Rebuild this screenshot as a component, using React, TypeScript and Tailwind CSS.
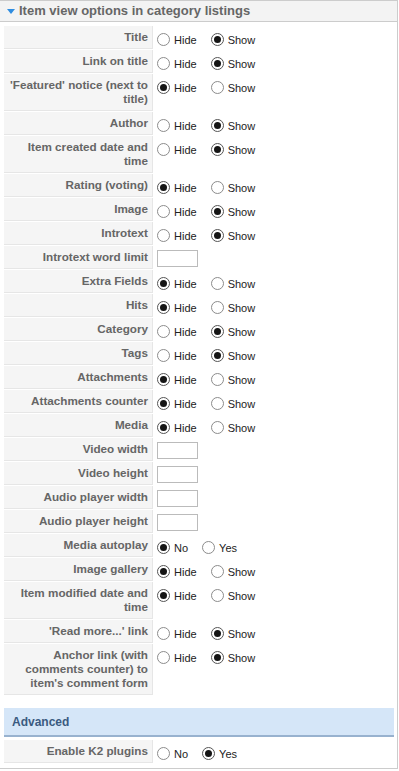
import React from 'react';

type Option = { label: string; checked: boolean };
type Row = { label: string; options?: Option[]; input?: boolean };

const hs = (show: boolean): Option[] => [
  { label: 'Hide', checked: !show },
  { label: 'Show', checked: show },
];

const rows: Row[] = [
  { label: 'Title', options: hs(true) },
  { label: 'Link on title', options: hs(true) },
  { label: "'Featured' notice (next to title)", options: hs(false) },
  { label: 'Author', options: hs(true) },
  { label: 'Item created date and time', options: hs(true) },
  { label: 'Rating (voting)', options: hs(false) },
  { label: 'Image', options: hs(true) },
  { label: 'Introtext', options: hs(true) },
  { label: 'Introtext word limit', input: true },
  { label: 'Extra Fields', options: hs(false) },
  { label: 'Hits', options: hs(false) },
  { label: 'Category', options: hs(true) },
  { label: 'Tags', options: hs(true) },
  { label: 'Attachments', options: hs(false) },
  { label: 'Attachments counter', options: hs(false) },
  { label: 'Media', options: hs(false) },
  { label: 'Video width', input: true },
  { label: 'Video height', input: true },
  { label: 'Audio player width', input: true },
  { label: 'Audio player height', input: true },
  {
    label: 'Media autoplay',
    options: [
      { label: 'No', checked: true },
      { label: 'Yes', checked: false },
    ],
  },
  { label: 'Image gallery', options: hs(false) },
  { label: 'Item modified date and time', options: hs(false) },
  { label: "'Read more...' link", options: hs(true) },
  { label: "Anchor link (with comments counter) to item's comment form", options: hs(true) },
];

const Radio = ({ checked }: { checked: boolean }) => (
  <span
    className={`mt-[1px] flex h-[13px] w-[13px] shrink-0 items-center justify-center rounded-full border bg-white ${
      checked ? 'border-[#555]' : 'border-[#8c8c8c]'
    }`}
  >
    {checked && <span className="h-[7px] w-[7px] rounded-full bg-[#151515]" />}
  </span>
);

const FieldRow = ({ row }: { row: Row }) => (
  <div className="flex">
    <div className="w-[149px] shrink-0 border-r border-b border-[#e6e6e6] bg-[#f5f5f5] pt-[4px] pr-[4px] pb-[4px] pl-[4px] text-right text-[11.7px] leading-[14px] font-bold text-[#666]">
      {row.label}
    </div>
    {row.input ? (
      <div className="pt-[4px] pl-[4px]">
        <div className="h-[17px] w-[41px] border border-[#bbb] bg-white" />
      </div>
    ) : (
      <div className="flex items-start pt-[6px] pl-[4px]">
        {row.options?.map((o) => (
          <div key={o.label} className="mr-[14px] flex items-start">
            <Radio checked={o.checked} />
            <span className="mt-[1px] ml-[4px] text-[11px] leading-[14px] text-[#222]">{o.label}</span>
          </div>
        ))}
      </div>
    )}
  </div>
);

export default function App() {
  return (
    <div className="w-[398px] border-t border-r border-b border-[#ccc] bg-white pb-[5px] font-['Liberation_Sans',Arial,sans-serif]">
      {/* panel header */}
      <div className="flex h-[21px] items-center border-b border-[#ccc] bg-[#f3f3f3]">
        <svg width="8" height="5" viewBox="0 0 8 5" className="mr-[4px] ml-[7px]">
          <polygon points="0,0 8,0 4,5" fill="#2f8de0" />
        </svg>
        <span className="text-[13px] leading-[16px] font-bold text-[#666]">
          Item view options in category listings
        </span>
      </div>

      <div className="mt-[4px] flex flex-col gap-[1px] pl-[4px]">
        {rows.map((r) => (
          <FieldRow key={r.label} row={r} />
        ))}
      </div>

      {/* Advanced */}
      <div className="mt-[13px] ml-[4px] flex h-[29px] w-[390px] items-center border-b-2 border-[#98b2cf] bg-[#d5e6f8] pl-[8px] text-[12px] font-bold text-[#3a5a80]">
        Advanced
      </div>

      <div className="mt-[3px] pl-[4px]">
        <FieldRow
          row={{
            label: 'Enable K2 plugins',
            options: [
              { label: 'No', checked: false },
              { label: 'Yes', checked: true },
            ],
          }}
        />
      </div>
    </div>
  );
}
